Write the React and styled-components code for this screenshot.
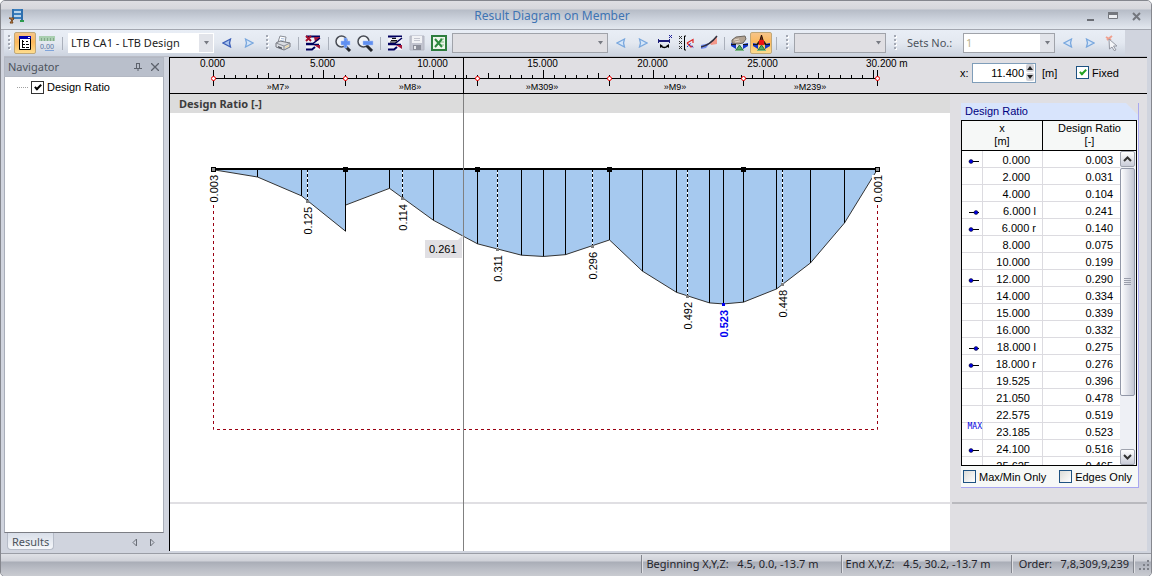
import React from 'react';
import styled, { createGlobalStyle, css } from 'styled-components';

const UI = '"Noto Sans", "Open Sans", sans-serif';
const PLAIN = '"Liberation Sans", Arial, sans-serif';

const GlobalStyle = createGlobalStyle`
  *, *::before, *::after { box-sizing: border-box; }
  body { margin: 0; background: #fff; font-family: ${PLAIN}; font-size: 11px; color: #000; }
  button, input, select { font: inherit; color: inherit; margin: 0; padding: 0; }
  svg { display: block; }
`;

/* ---------- window frame ---------- */

const Window = styled.div`
  display: flex;
  flex-direction: column;
  min-height: 100vh;
  border: 1px solid #85878e;
  border-radius: 5px;
  overflow: hidden;
  background: #d0d4de;
`;

const TitleBar = styled.header`
  display: grid;
  grid-template-columns: auto 1fr auto;
  align-items: center;
  height: 29px;
  padding: 2px 4px 0 8px;
  border-bottom: 1px solid #a3a7b0;
  background: linear-gradient(#dfdfe3 0, #d6d7dc 8px, #b6bcc7 9px, #ccd2dc 18px, #e3e8ef 28px);
`;

const Title = styled.h1`
  margin: 0;
  text-align: center;
  font: 400 12px/16px ${UI};
  color: #3f74b3;
`;

const WindowButtons = styled.div`
  display: flex;
  justify-content: flex-end;
  gap: 1px;
`;

const WindowButton = styled.button`
  display: grid;
  place-items: center;
  width: 22px;
  height: 20px;
  border: 0;
  background: none;
`;

/* ---------- toolbar ---------- */

const ToolbarRow = styled.div`
  display: flex;
  height: 27px;
  margin: 0 4px 0 3px;
  border-bottom: 1px solid #b9bcc6;
`;

const ToolGroup = styled.div`
  display: flex;
  align-items: center;
  padding-right: 2px;
  background: linear-gradient(#e9eef6, #e3e8f0 50%, #ccd3df);
`;

const GripSlot = styled.span`
  display: grid;
  place-items: center;
  width: 10px;
`;

const Separator = styled.span`
  width: 1px;
  height: 13px;
  margin: 0 3px 0 4px;
  background: #aab0bb;
`;

const ToolButton = styled.button`
  display: grid;
  place-items: center;
  width: 22px;
  height: 22px;
  border: 1px solid transparent;
  border-radius: 2px;
  background: none;
  ${(p) => p.$active && css`
    border-color: #c0a878;
    background: linear-gradient(#f6c489, #fcb95d 45%, #fedd8d);
  `}
`;

const ComboFrame = styled.span`
  position: relative;
  width: ${(p) => p.$width}px;
  height: 20px;
  margin: 0 2px;
`;

const ComboSelect = styled.select`
  appearance: none;
  width: 100%;
  height: 100%;
  padding: 0 18px 0 2px;
  border: 1px solid ${(p) => (p.$flat ? '#fff' : '#a0a3aa')};
  border-radius: 0;
  background: ${(p) => (p.$gray ? '#e0dfe3' : '#fff')};
  font: 11px/16px ${UI};
  color: #1d1d22;
  opacity: 1;
  &:disabled { color: #b9b28e; }
`;

const ComboArrow = styled.span`
  position: absolute;
  top: 1px;
  right: 1px;
  display: grid;
  place-items: center;
  width: 14px;
  height: 18px;
  background: ${(p) => (p.$gray ? '#e0dfe3' : '#e2e4ea')};
  pointer-events: none;
`;

const ToolLabel = styled.label`
  width: 61px;
  padding-left: 7px;
  font: 11px/16px ${UI};
  color: #4c535c;
`;

/* ---------- body ---------- */

const Body = styled.div`
  flex: 1;
  display: flex;
  padding: 0 4px 2px 3px;
  gap: 5px;
`;

const Navigator = styled.aside`
  display: flex;
  flex-direction: column;
  width: 160px;
  flex: none;
`;

const NavHeader = styled.div`
  display: flex;
  align-items: center;
  height: 20px;
  padding: 0 0 0 3px;
  border: 1px solid #b3b8c3;
  background: #b9bfcb;
`;

const NavTitle = styled.h2`
  flex: 1;
  margin: 0;
  font: 400 11px/16px ${UI};
  color: #4c535c;
`;

const NavButton = styled.button`
  display: grid;
  place-items: center;
  width: 17px;
  height: 16px;
  border: 0;
  background: none;
`;

const NavList = styled.div`
  flex: 1;
  padding: 1px 12px;
  border: 1px solid #a9aeb9;
  border-top: 0;
  border-bottom-color: #7b7d84;
  background: #fff;
`;

const TreeItem = styled.label`
  display: flex;
  align-items: center;
  gap: 3px;
  height: 18px;
`;

const TreeBranch = styled.span`
  width: 11px;
  border-top: 1px dotted #a0a0a0;
`;

const NavFooter = styled.div`
  display: flex;
  align-items: center;
  justify-content: space-between;
  height: 18px;
  padding-left: 3px;
`;

const NavTab = styled.button`
  height: 17px;
  padding: 0 4px;
  align-self: flex-start;
  border: 1px solid #b6bcc8;
  border-top: 0;
  border-radius: 0 0 4px 4px;
  background: linear-gradient(#d9dfe9, #f5f7fa);
  font: 11px/15px ${UI};
  color: #4c535c;
`;

const NavArrows = styled.div`
  display: flex;
  padding-right: 4px;
`;

const Main = styled.main`
  position: relative;
  flex: 1;
  min-width: 0;
  display: flex;
  flex-direction: column;
  border-left: 1px solid #000;
  background: #e0dfe3;
`;

const Cursor = styled.div`
  position: absolute;
  top: 0;
  bottom: 0;
  left: 293px;
  width: 1px;
  background: linear-gradient(#000 37px, #808080 37px);
`;

const RulerRow = styled.div`
  display: flex;
  height: 37px;
  border-top: 1px solid #000;
  border-bottom: 1px solid #000;
`;

const RulerArea = styled.div`
  flex: 1;
  min-width: 0;
  overflow: hidden;
`;

const Controls = styled.div`
  display: flex;
  align-items: center;
  width: 187px;
  height: 29px;
`;

const FieldLabel = styled.label`
  width: 12px;
`;

const SpinBox = styled.span`
  display: flex;
  align-items: center;
  width: 64px;
  height: 20px;
  border: 1px solid #7f9db9;
  background: #fff;
`;

const SpinInput = styled.input`
  flex: 1;
  min-width: 0;
  border: 0;
  outline: 0;
  background: none;
  text-align: right;
`;

const SpinButtons = styled.span`
  display: flex;
  flex-direction: column;
  gap: 1px;
  padding: 0 1px 0 2px;
`;

const SpinButton = styled.button`
  display: grid;
  place-items: center;
  width: 8px;
  height: 8px;
  border: 0;
  border-radius: 2px;
  background: #d3d3d8;
`;

const Unit = styled.span`
  width: 40px;
  padding-left: 6px;
`;

const Check = styled.input.attrs({ type: 'checkbox' })`
  appearance: none;
  display: grid;
  place-items: center;
  flex: none;
  width: 13px;
  height: 13px;
  border: 1px solid ${(p) => (p.$dark ? '#333' : '#1d5281')};
  background: linear-gradient(135deg, #dcdcd7, #fff);
  &:checked { background: #fff; }
  &:checked::after {
    content: '';
    width: 4px;
    height: 7px;
    margin-bottom: 2px;
    border: solid ${(p) => (p.$dark ? '#000' : '#21a121')};
    border-width: 0 2px 2px 0;
    transform: rotate(45deg);
  }
`;

const CheckLabel = styled.label`
  display: flex;
  align-items: center;
  gap: 3px;
  white-space: nowrap;
`;

const Content = styled.div`
  flex: 1;
  display: flex;
`;

const ChartColumn = styled.section`
  flex: 1;
  min-width: 0;
  display: flex;
  flex-direction: column;
  background: #fff;
`;

const ChartTitle = styled.h2`
  margin: 0;
  height: 19px;
  padding-left: 9px;
  background: #dcdcdc;
  font: 700 11px/19px ${UI};
  color: #3c3c3c;
`;

const ChartArea = styled.div`
  flex: 1;
  min-height: 389px;
  overflow: hidden;
`;

const PaneFooter = styled.div`
  height: 49px;
  border-top: 2px solid ${(p) => (p.$dark ? '#b9b9be' : '#e0dfe3')};
`;

const SideColumn = styled.section`
  display: flex;
  flex-direction: column;
  flex: none;
  width: 197px;
  padding: 9px 0 0 2px;
`;

const SideBody = styled.div`
  flex: 1;
  padding: 0 8px 0 9px;
`;

const ResultBox = styled.div`
  border: solid #a9a7f0;
  border-width: 0 1px 1px 0;
  background: #f6f8f7;
`;

const ResultTitle = styled.h3`
  margin: 0;
  height: 17px;
  padding-left: 4px;
  background: linear-gradient(225deg, #e0dfe3 8px, #d8e4fc 9px);
  font: 400 11px/17px ${PLAIN};
  color: #000080;
`;

const TableFrame = styled.div`
  position: relative;
  height: 346px;
  margin-right: 1px;
  border: 1px solid #000;
  background: #fff;
  overflow: hidden;
`;

const DataTable = styled.table`
  width: 100%;
  table-layout: fixed;
  border-collapse: separate;
  border-spacing: 0;
`;

const HeadCell = styled.th`
  height: 30px;
  padding: 0 0 1px;
  border-bottom: 1px solid #000;
  border-right: ${(p) => (p.$last ? 0 : '1px solid #000')};
  background: #f6f8f7;
  font-weight: 400;
  line-height: 13px;
`;

const Cell = styled.td`
  height: 17px;
  padding: ${(p) => (p.$raised ? 0 : 2)}px ${(p) => p.$pad || 0}px 0 0;
  vertical-align: ${(p) => (p.$raised ? 'top' : 'middle')};
  border-bottom: 1px solid #dcdbe0;
  border-right: 1px solid #dcdbe0;
  line-height: 14px;
  text-align: right;
`;

const Marker = styled.span`
  display: flex;
  justify-content: flex-end;
  color: #0000e0;
  font: 8px/8px "DejaVu Sans Mono", monospace;
`;

const ScrollBar = styled.div`
  position: absolute;
  top: 30px;
  right: 0;
  bottom: 0;
  display: flex;
  flex-direction: column;
  width: 16px;
  background: #eef0f5;
`;

const ScrollButton = styled.button`
  display: grid;
  place-items: center;
  width: 15px;
  height: 16px;
  border: 1px solid #9fa3ae;
  border-radius: 2px;
  background: linear-gradient(#fff, #c9ccd8);
`;

const ScrollTrack = styled.div`
  flex: 1;
`;

const ScrollThumb = styled.div`
  display: grid;
  place-items: center;
  width: 15px;
  height: 81%;
  margin-top: 1px;
  border: 1px solid #9298a8;
  border-radius: 2px;
  background: linear-gradient(90deg, #fdfdfe, #e3e5ec 45%, #c3c6d3);
`;

const ResultFooter = styled.div`
  display: flex;
  align-items: center;
  justify-content: space-between;
  height: 21px;
  padding: 0 6px 0 2px;
`;

/* ---------- status bar ---------- */

const StatusBar = styled.footer`
  display: flex;
  align-items: center;
  justify-content: flex-end;
  height: 23px;
  padding-bottom: 2px;
  border-top: 1px solid #9a9da5;
  background: linear-gradient(#dfe1e6, #cfd1d8 7px, #a9adb7 8px, #bbbec6 15px, #c9cbd1);
  font: 11px/18px ${UI};
  color: #24242c;
  white-space: pre;
`;

const StatusCell = styled.span`
  height: 18px;
  padding: 0 ${(p) => p.$end}px 0 ${(p) => p.$start || 4}px;
  border-left: 1px solid #83868e;
  box-shadow: inset 1px 0 #dfe0e4;
`;

/* ---------- icons ---------- */

const Svg = ({ w = 16, h = 16, children }) => (
  <svg width={w} height={h} viewBox={`0 0 ${w} ${h}`} aria-hidden="true">{children}</svg>
);

const AppIcon = () => (
  <Svg w={16} h={16}>
    <path d="M3 2H14M3 6H14M3 10H14" stroke="#3a7ebd" strokeWidth="2" />
    <path d="M4 1V12M13 1V13" stroke="#2d6fae" strokeWidth="2" />
    <path d="M5 4H12M5 8H12" stroke="#b9d4ea" strokeWidth="2" />
    <path d="M0 10H5L3 13L4 15H1L3 12Z" fill="#d89045" stroke="#70431c" strokeWidth="1" />
    <path d="M11 12H15V14H11Z" fill="#2c9a4e" />
  </Svg>
);

const Grip = () => (
  <Svg w={3} h={16}>
    {[0, 4, 8, 12].map((y) => (
      <React.Fragment key={y}>
        <path d={`M1 ${y + 1}h2v2h-2z`} fill="#fff" />
        <path d={`M0 ${y}h2v2h-2z`} fill="#a3a8b3" />
      </React.Fragment>
    ))}
  </Svg>
);

const Down = ({ color = '#777a82' }) => (
  <Svg w={7} h={4}><path d="M1 0H6L3.5 3.5Z" fill={color} /></Svg>
);

const ArrowIcon = ({ right, pale }) => (
  <Svg w={10} h={10}>
    <path
      d={right ? 'M1.500 1L9 5L1.500 9L2.500 5Z' : 'M8.500 1L1 5L8.500 9L7.500 5Z'}
      fill={pale ? '#d5e6f9' : '#a9c4ee'}
      stroke={pale ? '#7aa8de' : '#3d60b8'}
      strokeWidth="1.300"
    />
  </Svg>
);

const TreeIcon = () => (
  <Svg>
    <path d="M2.500 1.500h11v13h-11z" fill="#fff" stroke="#000" />
    <path d="M2 1h12v3h-12z" fill="#0000b0" />
    <path d="M11 2h2v1h-2z" fill="#fff" />
    <path d="M5.500 5V12.500M5 6.500H7M5 9.500H8M5 12.500H8M9 6.500H11M9 9.500H12M9 12.500H12" stroke="#000" />
  </Svg>
);

const NumberIcon = () => (
  <svg width="17" height="16" viewBox="0 0 17 16" aria-hidden="true">
    <path d="M0 1h16v5H0z" fill="#a9cfb0" />
    <path d="M2.500 3v3M5.500 3v3M8.500 3v3M11.500 3v3M14.500 3v3" stroke="#83a88b" />
    <text x="1" y="14" fontFamily="Noto Sans" fontSize="7" fill="#55749e">0.00</text>
    <path d="M6 15.500H15" stroke="#7fa4da" />
  </svg>
);

const PrinterIcon = () => (
  <Svg>
    <path d="M5 1L11 2L10 8L3 7Z" fill="#fff" stroke="#8a8f98" />
    <path d="M6 3.500L9.500 4M5.500 5.500L9 6" stroke="#a9bedc" />
    <path d="M1 8L5 6L15 8V12L9 15L1 12Z" fill="#d9dce2" stroke="#74777f" />
    <path d="M1 8L9 11L15 8M9 11V15" fill="none" stroke="#8a8d95" />
    <path d="M3 11L7 12.500V14L3 12.500Z" fill="#555962" />
    <path d="M10 12L14 10V11L10 13Z" fill="#f1d68b" />
  </Svg>
);

const DiagramIcon = ({ remove }) => (
  <Svg>
    <path d="M1 1h14v14H1z" fill="#f3f3f8" />
    <path d="M1 1.500H15" stroke="#00005e" strokeWidth="2" />
    <path d="M9 2H15L14 5L10 7Z" fill={remove ? '#a5183b' : '#e9e9ee'} />
    <path d="M1 8.500H8L15 3" fill="none" stroke="#00005e" strokeWidth="1.500" />
    <path d="M1 9.500H14" stroke="#00005e" strokeWidth="1.500" />
    <path d="M9 10H15V14Z" fill="#a5183b" />
    <path d="M1 14.500H7L10 12" fill="none" stroke="#00005e" strokeWidth="2" />
    {remove ? (
      <path d="M1 1L6 6M6 1L1 6" stroke="#a5102d" strokeWidth="2" />
    ) : (
      <path d="M4 5l1 1l1-1l1 1l1-1l1 1l1-1M5 4l1-1l1 1l1-1l1 1M3 7h7" fill="none" stroke="#111" />
    )}
  </Svg>
);

const ZoomIcon = ({ minus }) => (
  <Svg w={17} h={17}>
    <circle cx="6.500" cy="6.500" r="5.500" fill="#f1f4f8" stroke="#484c54" strokeWidth="1.500" />
    <path d="M9.500 10.500L15 16" stroke="#25282e" strokeWidth="3" />
    <path d={minus ? 'M6 6H16V10H6Z' : 'M9 3H12V6H15V10H12V13H9V10H6V6H9Z'} fill="#5f8ff0" stroke="#a9c2f4" strokeWidth="0.500" />
  </Svg>
);

const DiskIcon = () => (
  <Svg>
    <path d="M1 1h14v14H1z" fill="#c2c4cf" stroke="#b4b7c2" />
    <path d="M3 1h10v7H3z" fill="#f1f2f5" />
    <path d="M5 3.500h6M5 5.500h6" stroke="#c3c5ce" />
    <path d="M4 10h8v5H4z" fill="#8b8e99" />
    <path d="M5 11h2v3H5z" fill="#e8e9ed" />
  </Svg>
);

const ExcelIcon = () => (
  <Svg>
    <path d="M1 1h14v14H1z" fill="#eef6ec" stroke="#2d7d3d" strokeWidth="2" />
    <path d="M9 4h4M9 7h4M9 10h4" stroke="#83bc86" />
    <path d="M4 4L11 12M11 4L4 12" stroke="#2f8a3f" strokeWidth="2" />
  </Svg>
);

const SpanIcon = () => (
  <Svg>
    <path d="M1 6H13" stroke="#1c1c78" strokeWidth="2" />
    <path d="M1.500 4v4M12.500 4v4" stroke="#1c1c78" />
    <path d="M12 0l3 3M15 0l-3 3" stroke="#1c1c98" />
    <path d="M4 11Q7 14 11 11" fill="none" stroke="#000" strokeWidth="1.500" />
    <path d="M3 9v4l3-2zM12 9v4l-3-2z" fill="#000" />
  </Svg>
);

const SectionIcon = () => (
  <Svg>
    <path d="M0 1l3 3M3 1L0 4M0 6l3 3M3 6L0 9M0 11l3 3M3 11l-3 3" stroke="#333" />
    <path d="M7 1H5.500V15H7" fill="none" stroke="#000" />
    <path d="M8 8L14 4.500V8M8 8L12 12L14 11" fill="none" stroke="#e02626" strokeWidth="1.200" />
    <path d="M8 12L12 8M10 9L15 13" stroke="#2331c9" strokeDasharray="2 1" />
  </Svg>
);

const SmoothIcon = () => (
  <Svg w={17} h={16}>
    <path d="M0 10L9 8L5 13L0 14Z" fill="#718cf0" />
    <path d="M9 8L16 1V9L10 10Z" fill="#f3988a" />
    <path d="M0 12Q9 10 16 1" fill="none" stroke="#30303e" strokeWidth="1.500" />
  </Svg>
);

const SupportIcon = ({ red }) => (
  <Svg w={17} h={17}>
    <path d="M0 8L5 9V14L0 11ZM17 8L12 9V14L17 11Z" fill="#1436c7" />
    {red ? (
      <>
        <path d="M8.500 0L10 5L13 9H4L7 5Z" fill="#7c2c10" stroke="#26120a" />
        <path d="M6 5h5v5H6z" fill="#f01414" />
      </>
    ) : (
      <>
        <path d="M1 5L5 2L14 1L15 4L12 8L7 9L1 8Z" fill="#b3a392" stroke="#6b655e" />
        <path d="M3 5L8 4M4 7L9 6" stroke="#e0d5c8" />
      </>
    )}
    <path d="M0 9.500H5M12 9.500H17" stroke="#15151d" />
    <path d="M8.500 10L12 15H5Z" fill="#55ae64" stroke="#2b6a38" />
    <path d="M4 15.500h9" stroke="#7cba84" />
  </Svg>
);

const PickIcon = () => (
  <Svg>
    <path d="M2 2l5 3M8 1L3 5" stroke="#f0a08f" strokeWidth="2" />
    <path d="M5 4L13 11H9.500L12 15L10 15.500L8 12L5.500 14Z" fill="#f4f5f8" stroke="#9498a3" />
  </Svg>
);

/* ---------- diagram data ---------- */

const STATIONS = [
  [0, 0.003], [2, 0.031], [4, 0.104], [6, 0.241], [6, 0.14], [8, 0.075], [10, 0.199],
  [12, 0.29], [14, 0.334], [15, 0.339], [16, 0.332], [18, 0.275], [19.525, 0.396],
  [21.05, 0.478], [22.575, 0.519], [23.185, 0.523], [24.1, 0.516], [25.625, 0.465],
  [27.15, 0.364], [28.675, 0.209], [30.2, 0.001],
];

const LABELS = [
  [137, '0.125'], [232, '0.114'], [327, '0.311'], [422, '0.296'], [517, '0.492'], [612, '0.448'],
];

const MEMBER_ENDS = [0, 6, 12, 18, 24.1, 30.2];
const MEMBERS = [[108, '»M7»'], [240, '»M8»'], [372, '»M309»'], [505, '»M9»'], [640, '»M239»']];

const BASE = 56;
const px = (m) => Math.round(43 + m * 21.99) + 0.5;
const py = (v) => BASE + v * 258;

const depthAt = (x) => {
  for (let i = 1; i < STATIONS.length; i += 1) {
    const [a, va] = STATIONS[i - 1];
    const [b, vb] = STATIONS[i];
    if (x >= px(a) && x <= px(b) && b > a) {
      return Math.round(py(va + ((vb - va) * (x - px(a))) / (px(b) - px(a))));
    }
  }
  return BASE;
};

const Ruler = () => {
  const ticks = [];
  for (let i = 0; i <= 60; i += 1) {
    const top = i % 10 === 0 ? 12 : i % 5 === 0 ? 15 : 17;
    ticks.push(<path key={i} d={`M${px(i / 2)} ${top}V20`} stroke="#000" />);
  }
  return (
    <svg width="100%" height="35" fontFamily="Liberation Sans" fontSize="10">
      <path d={`M${px(0)} 20.500H${px(30.2)}`} stroke="#000" />
      {ticks}
      <path d={`M${px(0)} 12V28M${px(30.2)} 12V28`} stroke="#000" />
      {[0, 5, 10, 15, 20, 25].map((m) => (
        <text key={m} x={px(m) - 1} y="9" textAnchor="middle">{m.toFixed(3)}</text>
      ))}
      <text x="696" y="9">30.200 m</text>
      {MEMBER_ENDS.map((m) => (
        <g key={m}>
          <path d={`M${px(m)} 22V28`} stroke="#000" />
          <circle cx={px(m)} cy="20.500" r="2" fill="#fff" stroke="#f00000" />
        </g>
      ))}
      {MEMBERS.map(([x, name]) => (
        <text key={name} x={x} y="32" fontSize="9" textAnchor="middle">{name}</text>
      ))}
    </svg>
  );
};

const Vertical = ({ x, y, children, ...rest }) => (
  <text transform={`translate(${x} ${y}) rotate(-90)`} textAnchor="end" {...rest}>{children}</text>
);

const Diagram = () => {
  const line = STATIONS.map(([m, v]) => `${px(m)},${py(v)}`).join(' ');
  return (
    <svg width="100%" height="389" fontFamily="Liberation Sans" fontSize="11">
      <path
        d={`M${px(0)} ${BASE}V316.500H${px(30.2)}V${BASE}`}
        fill="none"
        stroke="#9a0012"
        strokeDasharray="3 3"
      />
      <polygon points={`${px(0)},${BASE} ${line} ${px(30.2)},${BASE}`} fill="#a6c9ef" />
      <polyline points={line} fill="none" stroke="#333" />
      {STATIONS.slice(1, -1).map(([m, v]) => (
        <path key={`${m}-${v}`} d={`M${px(m)} ${BASE}V${py(v)}`} stroke="#000" />
      ))}
      {LABELS.map(([x, value]) => {
        const end = depthAt(x + 0.5);
        return (
          <g key={value}>
            <path d={`M${x + 0.5} ${BASE}V${end}`} stroke="#fff" />
            <path d={`M${x + 0.5} ${BASE}V${end}`} stroke="#000" strokeDasharray="3 2" />
            <rect x={x - 1} y={end - 1} width="3" height="3" fill="#808080" />
            <Vertical x={x + 5} y={end + 6}>{value}</Vertical>
          </g>
        );
      })}
      <path d={`M${px(0)} 56H${px(30.2)}`} stroke="#000" strokeWidth="2" />
      {MEMBER_ENDS.map((m, i) => (
        <rect
          key={m}
          x={px(m) - 2}
          y="54.500"
          width="4"
          height="4"
          stroke="#000"
          fill={i === 0 || i === 5 ? '#909090' : '#000'}
        />
      ))}
      <rect x="38" y="62" width="11" height="29" fill="#fff" />
      <rect x="702" y="62" width="12" height="29" fill="#fff" />
      <Vertical x={48} y={62}>0.003</Vertical>
      <Vertical x={712} y={62}>0.001</Vertical>
      <rect x={px(23.185) - 1.5} y="190" width="3" height="3" fill="#0000f0" />
      <Vertical x={558} y={197} fill="#0000f0" fontWeight="700" fontSize="11">0.523</Vertical>
      <path d="M288 127L293 122L292 128Z" fill="#e0dfe3" />
      <rect x="255" y="127" width="37" height="18" fill="#e0dfe3" />
      <text x="259" y="140">0.261</text>
    </svg>
  );
};

const ROWS = [
  ['0.000', '0.003', 'left'], ['2.000', '0.031'], ['4.000', '0.104'], ['6.000 l', '0.241', 'right'],
  ['6.000 r', '0.140', 'left'], ['8.000', '0.075'], ['10.000', '0.199'], ['12.000', '0.290', 'left'],
  ['14.000', '0.334'], ['15.000', '0.339'], ['16.000', '0.332'], ['18.000 l', '0.275', 'right'],
  ['18.000 r', '0.276', 'left'], ['19.525', '0.396'], ['21.050', '0.478'], ['22.575', '0.519'],
  ['23.185', '0.523', 'max'], ['24.100', '0.516', 'left'], ['25.625', '0.465'],
];

const RowMarker = ({ kind }) => {
  if (!kind) return null;
  if (kind === 'max') return <Marker>MAX</Marker>;
  return (
    <Marker>
      <svg width="14" height="8" viewBox="0 0 14 8" aria-hidden="true">
        <path d="M1 5.500H11" stroke="#000" strokeWidth="1" />
        <circle cx={kind === 'left' ? 3 : 8} cy="5.500" r="2" fill="#0000e0" stroke="#000" strokeWidth="0.500" />
      </svg>
    </Marker>
  );
};

const Combo = ({ width, gray, flat, value = '', label, id, disabled }) => (
  <ComboFrame $width={width}>
    <ComboSelect id={id} aria-label={label} $gray={gray} $flat={flat} disabled={disabled} defaultValue={value}>
      <option value={value}>{value}</option>
    </ComboSelect>
    <ComboArrow $gray={gray}><Down /></ComboArrow>
  </ComboFrame>
);

const Tool = ({ label, active, children }) => (
  <ToolButton type="button" aria-label={label} $active={active}>{children}</ToolButton>
);

const Toolbar = () => (
  <ToolbarRow role="toolbar">
    <ToolGroup>
      <GripSlot><Grip /></GripSlot>
      <Tool label="Navigator" active><TreeIcon /></Tool>
      <Tool label="Values"><NumberIcon /></Tool>
      <Separator />
      <Combo width={146} flat label="Design case" value="LTB CA1 - LTB Design" />
      <Tool label="Previous case"><ArrowIcon /></Tool>
      <Tool label="Next case"><ArrowIcon right pale /></Tool>
    </ToolGroup>
    <ToolGroup>
      <GripSlot><Grip /></GripSlot>
      <Tool label="Print"><PrinterIcon /></Tool>
      <Separator />
      <Tool label="Remove diagrams"><DiagramIcon remove /></Tool>
      <Separator />
      <Tool label="Zoom in"><ZoomIcon /></Tool>
      <Tool label="Zoom out"><ZoomIcon minus /></Tool>
      <Separator />
      <Tool label="Diagram settings"><DiagramIcon /></Tool>
      <Tool label="Save"><DiskIcon /></Tool>
      <Tool label="Export to Excel"><ExcelIcon /></Tool>
      <Combo width={156} gray disabled label="Saved diagram" />
      <Tool label="Previous diagram"><ArrowIcon pale /></Tool>
      <Tool label="Next diagram"><ArrowIcon right pale /></Tool>
      <Tool label="Reverse x axis"><SpanIcon /></Tool>
      <Tool label="Section values"><SectionIcon /></Tool>
      <Tool label="Smooth results"><SmoothIcon /></Tool>
      <Separator />
      <Tool label="Support picture"><SupportIcon /></Tool>
      <Tool label="Support results" active><SupportIcon red /></Tool>
      <Separator />
    </ToolGroup>
    <ToolGroup>
      <GripSlot><Grip /></GripSlot>
      <Combo width={92} gray disabled label="Display" />
    </ToolGroup>
    <ToolGroup>
      <GripSlot><Grip /></GripSlot>
      <ToolLabel htmlFor="sets">Sets No.:</ToolLabel>
      <Combo id="sets" width={92} disabled value="1" />
      <Tool label="Previous set"><ArrowIcon pale /></Tool>
      <Tool label="Next set"><ArrowIcon right pale /></Tool>
      <Tool label="Pick set"><PickIcon /></Tool>
    </ToolGroup>
  </ToolbarRow>
);

export default function App() {
  return (
    <>
      <GlobalStyle />
      <Window>
        <TitleBar>
          <AppIcon />
          <Title>Result Diagram on Member</Title>
          <WindowButtons>
            <WindowButton type="button" aria-label="Minimize">
              <Svg w={9} h={9}><path d="M1 8H8" stroke="#6b6e75" strokeWidth="2" /></Svg>
            </WindowButton>
            <WindowButton type="button" aria-label="Maximize">
              <Svg w={10} h={8}>
                <path d="M0.500 0.500h9v6h-9z" fill="#eceef2" stroke="#74777e" />
                <path d="M0 0h10v3H0z" fill="#74777e" />
              </Svg>
            </WindowButton>
            <WindowButton type="button" aria-label="Close">
              <Svg w={9} h={9}><path d="M1 1L8 8M8 1L1 8" stroke="#74777e" strokeWidth="2" /></Svg>
            </WindowButton>
          </WindowButtons>
        </TitleBar>
        <Toolbar />
        <Body>
          <Navigator>
            <NavHeader>
              <NavTitle>Navigator</NavTitle>
              <NavButton type="button" aria-label="Pin">
                <Svg w={8} h={8}><path d="M2.500 0V5M5.500 0V5M2 0.500H6M0 5.500H8M4 5V8" fill="none" stroke="#5d626c" /></Svg>
              </NavButton>
              <NavButton type="button" aria-label="Close navigator">
                <Svg w={8} h={8}><path d="M0 0L8 8M8 0L0 8" stroke="#5d626c" strokeWidth="1.300" /></Svg>
              </NavButton>
            </NavHeader>
            <NavList>
              <TreeItem>
                <TreeBranch />
                <Check $dark defaultChecked />
                Design Ratio
              </TreeItem>
            </NavList>
            <NavFooter>
              <NavTab type="button">Results</NavTab>
              <NavArrows>
                <NavButton type="button" aria-label="Scroll tabs left">
                  <Svg w={6} h={9}><path d="M4.500 1V8L1 4.500Z" fill="none" stroke="#6a6e77" /></Svg>
                </NavButton>
                <NavButton type="button" aria-label="Scroll tabs right">
                  <Svg w={6} h={9}><path d="M1.500 1V8L5 4.500Z" fill="none" stroke="#6a6e77" /></Svg>
                </NavButton>
              </NavArrows>
            </NavFooter>
          </Navigator>
          <Main>
            <RulerRow>
              <RulerArea><Ruler /></RulerArea>
              <Controls>
                <FieldLabel htmlFor="position">x:</FieldLabel>
                <SpinBox>
                  <SpinInput id="position" defaultValue="11.400" />
                  <SpinButtons>
                    <SpinButton type="button" aria-label="Increase">
                      <Svg w={6} h={4}><path d="M0 4L3 0L6 4Z" fill="#222" /></Svg>
                    </SpinButton>
                    <SpinButton type="button" aria-label="Decrease">
                      <Svg w={6} h={4}><path d="M0 0H6L3 4Z" fill="#222" /></Svg>
                    </SpinButton>
                  </SpinButtons>
                </SpinBox>
                <Unit>[m]</Unit>
                <CheckLabel><Check defaultChecked />Fixed</CheckLabel>
              </Controls>
            </RulerRow>
            <Content>
              <ChartColumn>
                <ChartTitle>Design Ratio [-]</ChartTitle>
                <ChartArea><Diagram /></ChartArea>
                <PaneFooter />
              </ChartColumn>
              <SideColumn>
                <SideBody>
                  <ResultBox>
                    <ResultTitle>Design Ratio</ResultTitle>
                    <TableFrame>
                      <DataTable>
                        <colgroup>
                          <col style={{ width: 21 }} />
                          <col style={{ width: 60 }} />
                          <col />
                        </colgroup>
                        <thead>
                          <tr>
                            <HeadCell colSpan={2}>x<br />[m]</HeadCell>
                            <HeadCell $last>Design Ratio<br />[-]</HeadCell>
                          </tr>
                        </thead>
                        <tbody>
                          {ROWS.map(([x, ratio, kind]) => (
                            <tr key={x}>
                              <Cell $raised={kind === 'max'}><RowMarker kind={kind} /></Cell>
                              <Cell $pad={x.includes(' ') ? 6 : 12}>{x}</Cell>
                              <Cell $pad={22}>{ratio}</Cell>
                            </tr>
                          ))}
                        </tbody>
                      </DataTable>
                      <ScrollBar>
                        <ScrollButton type="button" aria-label="Scroll up">
                          <Svg w={9} h={6}><path d="M1 5L4.500 1.500L8 5" fill="none" stroke="#333" strokeWidth="2" /></Svg>
                        </ScrollButton>
                        <ScrollTrack>
                          <ScrollThumb>
                            <Svg w={7} h={8}><path d="M0 0.500H7M0 2.500H7M0 4.500H7M0 6.500H7" stroke="#9a9eab" /></Svg>
                          </ScrollThumb>
                        </ScrollTrack>
                        <ScrollButton type="button" aria-label="Scroll down">
                          <Svg w={9} h={6}><path d="M1 1L4.500 4.500L8 1" fill="none" stroke="#333" strokeWidth="2" /></Svg>
                        </ScrollButton>
                      </ScrollBar>
                    </TableFrame>
                    <ResultFooter>
                      <CheckLabel><Check />Max/Min Only</CheckLabel>
                      <CheckLabel><Check />Edges Only</CheckLabel>
                    </ResultFooter>
                  </ResultBox>
                </SideBody>
                <PaneFooter $dark />
              </SideColumn>
            </Content>
            <Cursor />
          </Main>
        </Body>
        <StatusBar>
          <StatusCell $end={22}>{'Beginning X,Y,Z:   4.5, 0.0, -13.7 m'}</StatusCell>
          <StatusCell $end={20}>{'End X,Y,Z:   4.5, 30.2, -13.7 m'}</StatusCell>
          <StatusCell $start={7} $end={4}>{'Order:   7,8,309,9,239'}</StatusCell>
          <StatusCell $end={0}>
            <svg width="13" height="17" viewBox="0 0 13 17" aria-hidden="true">
              {[[9, 5], [9, 9], [5, 9], [9, 13], [5, 13], [1, 13]].map(([x, y]) => (
                <path key={`${x}-${y}`} d={`M${x} ${y}h2v2h-2z`} fill="#7d8088" />
              ))}
            </svg>
          </StatusCell>
        </StatusBar>
      </Window>
    </>
  );
}
